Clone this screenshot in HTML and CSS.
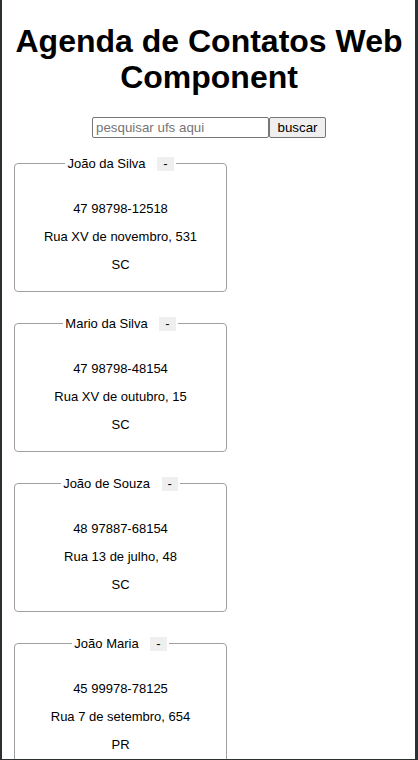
FILE: index.html
```html
<!DOCTYPE html>
<html lang="pt-BR">
<head>
<meta charset="utf-8">
<title>Agenda de Contatos Web Component</title>
<link rel="stylesheet" href="styles.css">
</head>
<body>
<h1 class="title">Agenda de Contatos Web Component</h1>
<div class="search"><input class="search-input" type="text" placeholder="pesquisar ufs aqui"><button class="search-btn">buscar</button></div>
<div class="cards">
  <fieldset class="card">
    <legend class="card-legend">João da Silva <button class="remove">-</button></legend>
    <p class="line">47 98798-12518</p>
    <p class="line">Rua XV de novembro, 531</p>
    <p class="line">SC</p>
  </fieldset>
  <fieldset class="card">
    <legend class="card-legend">Mario da Silva <button class="remove">-</button></legend>
    <p class="line">47 98798-48154</p>
    <p class="line">Rua XV de outubro, 15</p>
    <p class="line">SC</p>
  </fieldset>
  <fieldset class="card">
    <legend class="card-legend">João de Souza <button class="remove">-</button></legend>
    <p class="line">48 97887-68154</p>
    <p class="line">Rua 13 de julho, 48</p>
    <p class="line">SC</p>
  </fieldset>
  <fieldset class="card">
    <legend class="card-legend">João Maria <button class="remove">-</button></legend>
    <p class="line">45 99978-78125</p>
    <p class="line">Rua 7 de setembro, 654</p>
    <p class="line">PR</p>
  </fieldset>
</div>
<div class="frame"></div>
</body>
</html>
```
FILE: styles.css
```css
html, body {
  background: #ffffff;
}
body {
  margin: 8px;
  font-family: "Liberation Sans", Arial, sans-serif;
  color: #000000;
}
.title {
  font-size: 32px;
  font-weight: bold;
  text-align: center;
  margin: 15.44px 0 21.44px;
  line-height: 36px;
}
.search {
  display: flex;
  justify-content: center;
  height: 21px;
}
.search-input {
  box-sizing: border-box;
  width: 177px;
  height: 21px;
  margin: 0;
  padding: 1px 3px;
  font-family: "Liberation Sans", Arial, sans-serif;
  font-size: 13.33px;
  border: 1px solid #767676;
  border-radius: 2px;
  outline: none;
}
.search-input::placeholder {
  color: #757575;
}
.search-btn {
  box-sizing: border-box;
  width: 57px;
  height: 21px;
  margin: 0;
  padding: 1px 6px;
  font-family: "Liberation Sans", Arial, sans-serif;
  font-size: 13.33px;
  color: #000;
  background: #efefef;
  border: 1px solid #767676;
  border-radius: 2px;
}
.cards {
  margin-top: 18px;
  display: flex;
  flex-direction: column;
  gap: 24px;
}
.card {
  box-sizing: border-box;
  width: 213px;
  margin: 0 0 0 6px;
  padding: 16px 10px 6px;
  border: 1px solid #a0a0a0;
  border-radius: 4px;
  font-size: 13px;
  line-height: 15px;
  text-align: center;
  min-width: 0;
}
.card-legend {
  margin: 0 auto;
  padding: 0 2px;
  font-size: 13px;
  line-height: 16px;
}
.remove {
  margin: 0 0 0 8px;
  padding: 0 6px;
  height: 14px;
  border: none;
  border-radius: 0;
  background: #efefef;
  font-family: "Liberation Sans", Arial, sans-serif;
  font-size: 13px;
  line-height: 14px;
  color: #000;
  vertical-align: middle;
}
.line {
  margin: 13px 0;
}
.frame {
  position: fixed;
  inset: 0;
  border-left: 2px solid #2b3033;
  border-right: 3px solid #2b3033;
  border-bottom: 1px solid #2b3033;
  pointer-events: none;
}
```
